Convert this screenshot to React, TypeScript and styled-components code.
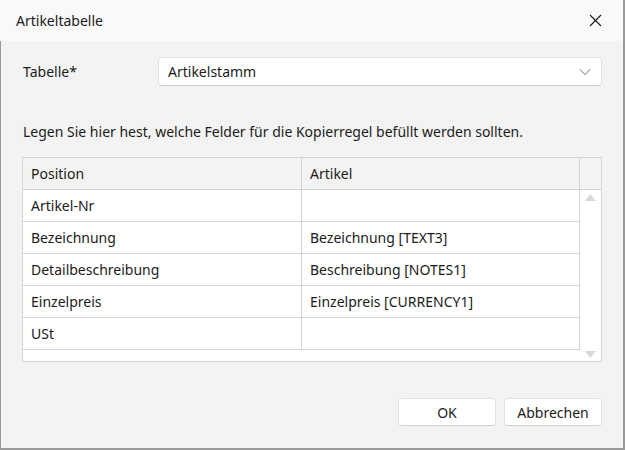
import React from "react";
import styled, { createGlobalStyle } from "styled-components";

const Global = createGlobalStyle`
  html, body { margin: 0; padding: 0; }
  body { width: 625px; height: 450px; overflow: hidden; font-family: "Noto Sans", "Open Sans", sans-serif; }
  * { box-sizing: border-box; }
`;

const Window = styled.div`
  width: 625px;
  height: 450px;
  display: flex;
  flex-direction: column;
  background: #f3f3f3;
  border-right: 2px solid #9a9a9a;
  border-bottom: 2px solid #9a9a9a;
  color: #1b1b1b;
  font-size: 14px;
`;

const TitleBar = styled.div`
  height: 41px;
  flex: none;
  display: flex;
  align-items: center;
  justify-content: space-between;
  padding: 0 20px 0 16px;
  background: #f9f9f9;
`;

const Title = styled.div`
  font-size: 14px;
  color: #1a1a1a;
  padding-bottom: 1px;
`;

const CloseButton = styled.button`
  width: 16px;
  height: 16px;
  border: none;
  background: transparent;
  padding: 0;
  display: flex;
  align-items: center;
  justify-content: center;
`;

const Body = styled.div`
  flex: 1;
  display: flex;
  flex-direction: column;
  padding: 16px 21px 0 22px;
  border-left: 1px solid #9a9a9a;
`;

const FieldRow = styled.div`
  display: flex;
  align-items: center;
  height: 29px;
`;

const Label = styled.div`
  width: 135px;
  flex: none;
`;

const Combo = styled.div`
  flex: 1;
  height: 29px;
  display: flex;
  align-items: center;
  justify-content: space-between;
  background: #ffffff;
  border: 1px solid #e3e3e3;
  border-bottom-color: #cdcdcd;
  border-radius: 4px;
  padding: 0 10px 0 9px;
`;

const Hint = styled.div`
  margin-top: 36px;
  line-height: 20px;
`;

const Table = styled.div`
  margin-top: 15px;
  margin-left: -1px;
  height: 205px;
  border: 1px solid #d4d4d4;
  background: #ffffff;
  display: grid;
  grid-template-columns: 1fr 21px;
`;

const Rows = styled.div`
  display: flex;
  flex-direction: column;
`;

const Row = styled.div<{ $header?: boolean }>`
  display: grid;
  grid-template-columns: 279px 1fr;
  height: 32px;
  background: ${(p) => (p.$header ? "#f3f3f3" : "#ffffff")};
`;

const Cell = styled.div`
  display: flex;
  align-items: center;
  padding: 0 8px;
  border-bottom: 1px solid #d4d4d4;
  border-right: 1px solid #d4d4d4;
  white-space: nowrap;
`;

const ScrollCol = styled.div`
  display: flex;
  flex-direction: column;
`;

const ScrollHead = styled.div`
  height: 32px;
  background: #f3f3f3;
  border-bottom: 1px solid #d4d4d4;
`;

const ScrollTrack = styled.div`
  flex: 1;
  display: flex;
  flex-direction: column;
  justify-content: space-between;
  align-items: center;
  padding: 4px 0 3px;
`;

const Footer = styled.div`
  margin-top: auto;
  display: flex;
  justify-content: flex-end;
  gap: 8px;
  padding-bottom: 22px;
`;

const Button = styled.button`
  width: 98px;
  height: 28px;
  background: #ffffff;
  border: 1px solid #e3e3e3;
  border-bottom-color: #cfcfcf;
  border-radius: 4px;
  font-family: inherit;
  font-size: 14px;
  color: #1b1b1b;
  padding: 0;
`;

const rows = [
  ["Artikel-Nr", ""],
  ["Bezeichnung", "Bezeichnung [TEXT3]"],
  ["Detailbeschreibung", "Beschreibung [NOTES1]"],
  ["Einzelpreis", "Einzelpreis [CURRENCY1]"],
  ["USt", ""],
];

export default function App() {
  return (
    <>
      <Global />
      <Window>
        <TitleBar>
          <Title>Artikeltabelle</Title>
          <CloseButton aria-label="Schließen">
            <svg width="13" height="13" viewBox="0 0 13 13">
              <path d="M1 1 L12 12 M12 1 L1 12" stroke="#1b1b1b" strokeWidth="1.1" />
            </svg>
          </CloseButton>
        </TitleBar>
        <Body>
          <FieldRow>
            <Label>Tabelle*</Label>
            <Combo>
              <span>Artikelstamm</span>
              <svg width="12" height="8" viewBox="0 0 12 8">
                <path d="M1 1.5 L6 6.5 L11 1.5" stroke="#6a6a6a" strokeWidth="1" fill="none" />
              </svg>
            </Combo>
          </FieldRow>
          <Hint>Legen Sie hier hest, welche Felder für die Kopierregel befüllt werden sollten.</Hint>
          <Table>
            <Rows>
              <Row $header>
                <Cell>Position</Cell>
                <Cell>Artikel</Cell>
              </Row>
              {rows.map(([a, b]) => (
                <Row key={a}>
                  <Cell>{a}</Cell>
                  <Cell>{b}</Cell>
                </Row>
              ))}
            </Rows>
            <ScrollCol>
              <ScrollHead />
              <ScrollTrack>
                <svg width="11" height="7" viewBox="0 0 11 7">
                  <path d="M0 7 L5.5 0 L11 7 Z" fill="#dadada" />
                </svg>
                <svg width="11" height="7" viewBox="0 0 11 7">
                  <path d="M0 0 L5.5 7 L11 0 Z" fill="#dadada" />
                </svg>
              </ScrollTrack>
            </ScrollCol>
          </Table>
          <Footer>
            <Button>OK</Button>
            <Button>Abbrechen</Button>
          </Footer>
        </Body>
      </Window>
    </>
  );
}
